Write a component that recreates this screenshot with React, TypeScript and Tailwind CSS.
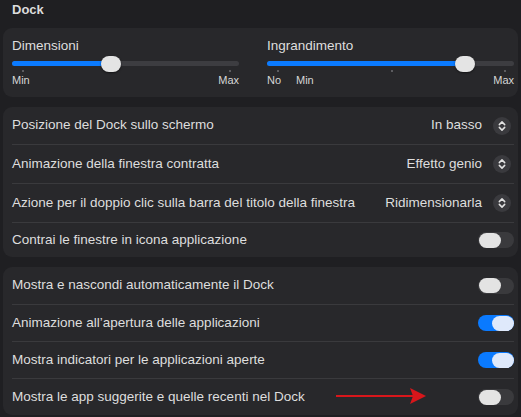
const font = { fontFamily: '"Liberation Sans", Arial, sans-serif' };

type SliderProps = {
  label: string;
  width: number;
  value: number;
  ticks: number[];
  labels: { text: string; left?: number; right?: boolean }[];
};

const Slider = ({ label, width, value, ticks, labels }: SliderProps) => (
  <div style={{ width }}>
    <div className="text-[13.5px] leading-4 text-[#dedede]">{label}</div>
    <div className="relative mt-[2px] h-[16px]">
      <div className="absolute left-0 right-0 top-[5px] h-[5px] rounded-full bg-[#3d3d41]" />
      <div
        className="absolute left-0 top-[5px] h-[5px] rounded-l-full bg-[#0b7bff]"
        style={{ width: value }}
      />
      {ticks.map((t) => (
        <div
          key={t}
          className="absolute top-[14px] h-[2px] w-[1.5px] bg-[#5c5c60]"
          style={{ left: t }}
        />
      ))}
      <div
        className="absolute top-0 h-[16px] w-[20px] rounded-full bg-[#e4e4e4] shadow-[0_1px_2px_rgba(0,0,0,0.5)]"
        style={{ left: value - 10 }}
      />
    </div>
    <div className="relative mt-[2px] h-[13px] text-[11px] leading-[13px] text-[#d6d6d6]">
      {labels.map((l) => (
        <span
          key={l.text}
          className="absolute top-0"
          style={l.right ? { right: 0 } : { left: l.left ?? 0 }}
        >
          {l.text}
        </span>
      ))}
    </div>
  </div>
);

const Stepper = () => (
  <svg width="18" height="18" viewBox="0 0 18 18">
    <circle cx="9" cy="9" r="9" fill="#3a3a3e" />
    <path
      d="M6.3 7.6 L9 4.9 L11.7 7.6 M6.3 10.4 L9 13.1 L11.7 10.4"
      fill="none"
      stroke="#e2e2e2"
      strokeWidth="1.5"
      strokeLinecap="round"
      strokeLinejoin="round"
    />
  </svg>
);

const Toggle = ({ on }: { on: boolean }) => (
  <div
    className={`flex h-[16px] w-[36px] items-center rounded-full px-[0.5px] ${
      on ? "justify-end bg-[#0a7aff]" : "justify-start bg-[#3a3a3d]"
    }`}
  >
    <div
      className={`h-[15px] w-[22px] rounded-full ${
        on ? "bg-[#dfe9fb]" : "bg-[#e3e3e3]"
      }`}
    />
  </div>
);

const Divider = () => <div className="ml-[9px] mr-[4px] h-px bg-[#3a3a3d]" />;

const Row = ({
  text,
  h,
  children,
}: {
  text: string;
  h: string;
  children: React.ReactNode;
}) => (
  <div className={`flex items-center justify-between pl-[9px] pr-[4px] ${h}`}>
    <span className="text-[13.5px] text-[#dedede]">{text}</span>
    {children}
  </div>
);

const Popup = ({ value }: { value: string }) => (
  <div className="flex items-center gap-[11px] pr-[3px]">
    <span className="text-[13.5px] text-[#dedede]">{value}</span>
    <Stepper />
  </div>
);

export default function App() {
  return (
    <div
      className="h-[417px] w-[521px] overflow-hidden bg-[#1f1f22] px-[3px]"
      style={font}
    >
      <div className="h-[28px] pl-[9px] pt-[2px] text-[13px] font-bold leading-4 text-[#dcdcdc]">
        Dock
      </div>

      <div className="grid grid-cols-[227px_247px] gap-x-[28px] rounded-[9px] bg-[#28282b] pb-[10px] pl-[9px] pr-[4px] pt-[10px]">
        <Slider
          label="Dimensioni"
          width={227}
          value={99}
          ticks={[10, 217]}
          labels={[{ text: "Min", left: 0 }, { text: "Max", right: true }]}
        />
        <Slider
          label="Ingrandimento"
          width={247}
          value={198}
          ticks={[10, 124, 237]}
          labels={[
            { text: "No", left: 0 },
            { text: "Min", left: 29 },
            { text: "Max", right: true },
          ]}
        />
      </div>

      <div className="mt-[10px] rounded-[9px] bg-[#28282b]">
        <Row text="Posizione del Dock sullo schermo" h="h-[37px]">
          <Popup value="In basso" />
        </Row>
        <Divider />
        <Row text="Animazione della finestra contratta" h="h-[38px]">
          <Popup value="Effetto genio" />
        </Row>
        <Divider />
        <Row
          text="Azione per il doppio clic sulla barra del titolo della finestra"
          h="h-[38px]"
        >
          <Popup value="Ridimensionarla" />
        </Row>
        <Divider />
        <Row text="Contrai le finestre in icona applicazione" h="h-[34px]">
          <Toggle on={false} />
        </Row>
      </div>

      <div className="relative mt-[10px] rounded-[9px] bg-[#28282b]">
        <Row text="Mostra e nascondi automaticamente il Dock" h="h-[37px]">
          <Toggle on={false} />
        </Row>
        <Divider />
        <Row text="Animazione all’apertura delle applicazioni" h="h-[36px]">
          <Toggle on={true} />
        </Row>
        <Divider />
        <Row text="Mostra indicatori per le applicazioni aperte" h="h-[36px]">
          <Toggle on={true} />
        </Row>
        <Divider />
        <Row
          text="Mostra le app suggerite e quelle recenti nel Dock"
          h="h-[36px]"
        >
          <Toggle on={false} />
        </Row>

        <svg
          className="absolute left-[333px] top-[120px]"
          width="92"
          height="18"
          viewBox="0 0 92 18"
        >
          <line x1="0" y1="9" x2="78" y2="9" stroke="#d8161b" strokeWidth="2.2" />
          <polygon points="74,1 90,9 74,17 77,9" fill="#d8161b" />
        </svg>
      </div>
    </div>
  );
}
